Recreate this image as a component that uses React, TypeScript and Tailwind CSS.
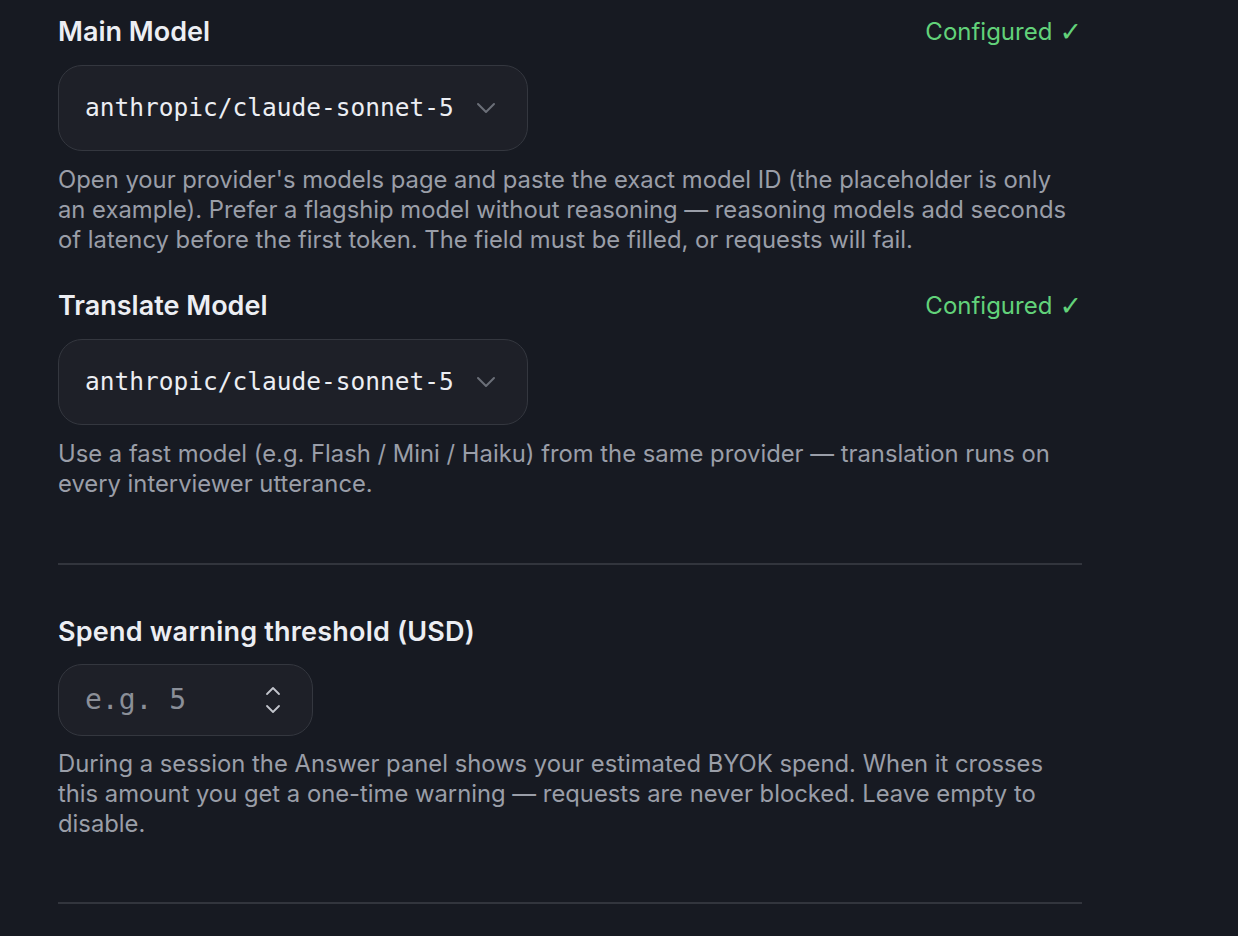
import React from 'react'

const sans = { fontFamily: 'Inter, "Noto Sans", sans-serif' }
const mono = { fontFamily: '"DejaVu Sans Mono", "Liberation Mono", monospace' }

const Chevron = () => (
  <svg width="20" height="12" viewBox="0 0 20 12" fill="none" className="shrink-0">
    <path d="M2 2l8 8 8-8" stroke="#6b6f78" strokeWidth="2" strokeLinecap="round" strokeLinejoin="round" />
  </svg>
)

const Spinner = () => (
  <svg width="18" height="30" viewBox="0 0 18 30" fill="none" className="shrink-0">
    <path d="M3 9l6-6 6 6" stroke="#c2c5cc" strokeWidth="1.8" strokeLinecap="round" strokeLinejoin="round" />
    <path d="M3 21l6 6 6-6" stroke="#c2c5cc" strokeWidth="1.8" strokeLinecap="round" strokeLinejoin="round" />
  </svg>
)

interface fieldProps
{
  title:string,
  value:string,
  desc:string,
  first?:boolean
}

const ModelField = ({ title, value, desc, first = false }:fieldProps) =>
{
  return (
    <section className={first ? '' : 'mt-[35px]'}>
      <div className="flex items-center justify-between">
        <h2 className="text-[27px] leading-[32px] font-semibold text-[#eceef3]">{title}</h2>
        <span className="flex items-center gap-[7px] text-[24px] leading-[32px] text-[#62d27a]">
          Configured
          <span className="text-[27px] leading-[32px]" style={{ fontFamily: '"DejaVu Sans", sans-serif' }}>✓</span>
        </span>
      </div>
      <div className="mt-[17px] flex h-[86px] w-[470px] items-center justify-between rounded-[24px] border border-[#34373f] bg-[#1e2028] pl-[26px] pr-[31px]">
        <span className="text-[24.5px] text-[#eceef3]" style={mono}>{value}</span>
        <Chevron />
      </div>
      <p className="mt-[14px] text-[23.8px] leading-[30px] text-[#9a9ea8]">{desc}</p>
    </section>
  )
}

export default function App()
{
  return (
    <div className="min-h-[936px] w-full bg-[#171a22]" style={sans}>
      <div className="w-[1082px] pl-[58px] pt-[16px]">
        <ModelField
          first
          title="Main Model"
          value="anthropic/claude-sonnet-5"
          desc="Open your provider's models page and paste the exact model ID (the placeholder is only an example). Prefer a flagship model without reasoning — reasoning models add seconds of latency before the first token. The field must be filled, or requests will fail."
        />
        <ModelField
          title="Translate Model"
          value="anthropic/claude-sonnet-5"
          desc="Use a fast model (e.g. Flash / Mini / Haiku) from the same provider — translation runs on every interviewer utterance."
        />

        <div className="mt-[64px] h-[2px] bg-[#32353d]" />

        <section className="mt-[51px]">
          <h2 className="text-[27px] leading-[32px] font-semibold tracking-[0.2px] text-[#eceef3]">Spend warning threshold (USD)</h2>
          <div className="mt-[16px] flex h-[72px] w-[255px] items-center justify-between rounded-[24px] border border-[#34373f] bg-[#1e2028] pl-[26px] pr-[30px]">
            <span className="text-[28px] text-[#8b8f98]" style={mono}>e.g. 5</span>
            <Spinner />
          </div>
          <p className="mt-[13px] text-[23.8px] leading-[30px] text-[#9a9ea8]">
            During a session the Answer panel shows your estimated BYOK spend. When it crosses this amount you get a one-time warning — requests are never blocked. Leave empty to disable.
          </p>
        </section>

        <div className="mt-[63px] h-[2px] bg-[#32353d]" />
      </div>
    </div>
  )
}
